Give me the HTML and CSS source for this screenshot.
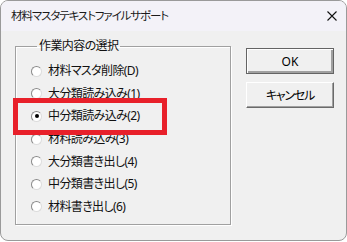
FILE: index.html
```html
<!DOCTYPE html>
<html lang="ja">
<head>
<meta charset="utf-8">
<title>材料マスタテキストファイルサポート</title>
<link rel="stylesheet" href="styles.css">
</head>
<body>
<div class="window">
  <div class="titlebar">
    <span class="title">材料マスタテキストファイルサポート</span>
    <svg class="close" width="10" height="10" viewBox="0 0 10 10"><path d="M0.5 0.5 L9.5 9.5 M9.5 0.5 L0.5 9.5" stroke="#111" stroke-width="1.1" fill="none"/></svg>
  </div>
  <div class="content">
    <fieldset class="group">
      <legend class="legend">作業内容の選択</legend>
      <div class="row"><span class="radio"></span><span class="label">材料マスタ削除(D)</span></div>
      <div class="row"><span class="radio"></span><span class="label">大分類読み込み(1)</span></div>
      <div class="row"><span class="radio checked"></span><span class="label">中分類読み込み(2)</span></div>
      <div class="row"><span class="radio"></span><span class="label">材料読み込み(3)</span></div>
      <div class="row"><span class="radio"></span><span class="label">大分類書き出し(4)</span></div>
      <div class="row"><span class="radio"></span><span class="label">中分類書き出し(5)</span></div>
      <div class="row"><span class="radio"></span><span class="label">材料書き出し(6)</span></div>
    </fieldset>
    <div class="buttons">
      <div class="btn default">OK</div>
      <div class="btn kana">キャンセル</div>
    </div>
  </div>
  <div class="highlight"></div>
</div>
</body>
</html>
```

FILE: styles.css
```css
html, body {
  margin: 0;
  padding: 0;
  background: #ffffff;
}
body {
  font-family: "Noto Sans", "Noto Sans CJK JP", sans-serif;
  font-size: 12px;
  color: #000;
  font-feature-settings: "palt";
}
.window {
  position: relative;
  width: 347px;
  height: 241px;
  box-sizing: border-box;
  border: 1px solid #9a9a9a;
  border-radius: 8px;
  overflow: hidden;
  background: #f0f0f0;
}
.titlebar {
  height: 30px;
  background: #f3f2f8;
  display: flex;
  align-items: center;
  justify-content: space-between;
  padding: 0 9px 0 10px;
}
.title {
  font-size: 11.5px;
  letter-spacing: -1.1px;
  color: #1a1a1a;
  line-height: 16px;
  margin-top: -1px;
}
.close {
  display: block;
}
.content {
  display: flex;
  align-items: flex-start;
  padding: 7px 0 0 14px;
}
.group {
  margin: 0;
  width: 216px;
  height: 187px;
  box-sizing: border-box;
  border: 1px solid #a0a0a0;
  box-shadow: inset 1px 1px 0 #fff, 1px 1px 0 #fff;
  padding: 6px 0 0 15px;
  min-width: 0;
}
.legend {
  padding: 0 2px;
  margin-left: 6px;
  line-height: 16px;
  font-size: 12px;
  letter-spacing: -0.6px;
  color: #111;
}
.row {
  display: flex;
  align-items: center;
  height: 22.6px;
}
.radio {
  width: 11px;
  height: 11px;
  box-sizing: border-box;
  border-radius: 50%;
  border: 1px solid;
  border-color: #8a8a8a #dcdcdc #dcdcdc #8a8a8a;
  background: #fff;
  display: flex;
  align-items: center;
  justify-content: center;
  margin-right: 6px;
  flex: none;
}
.radio.checked::after {
  content: "";
  width: 4px;
  height: 4px;
  border-radius: 50%;
  background: #000;
}
.label {
  line-height: 16px;
  letter-spacing: -0.6px;
  color: #111;
}
.buttons {
  display: flex;
  flex-direction: column;
  gap: 8px;
  margin-left: 15px;
  margin-top: 10px;
}
.btn {
  width: 88px;
  height: 26px;
  box-sizing: border-box;
  display: flex;
  align-items: center;
  justify-content: center;
  background: #f0f0f0;
  border: 1px solid;
  border-color: #ffffff #6a6a6a #6a6a6a #ffffff;
  box-shadow: inset -1px -1px 0 #a0a0a0;
  color: #000;
}
.btn.kana {
  letter-spacing: -1.2px;
}
.btn.default {
  border-color: #646464;
  box-shadow: inset 1px 1px 0 #fff, inset -2px -2px 0 #a0a0a0;
}
.highlight {
  position: absolute;
  left: 12px;
  top: 97px;
  width: 154px;
  height: 37px;
  box-sizing: border-box;
  border: 5px solid #e8202a;
}
```
